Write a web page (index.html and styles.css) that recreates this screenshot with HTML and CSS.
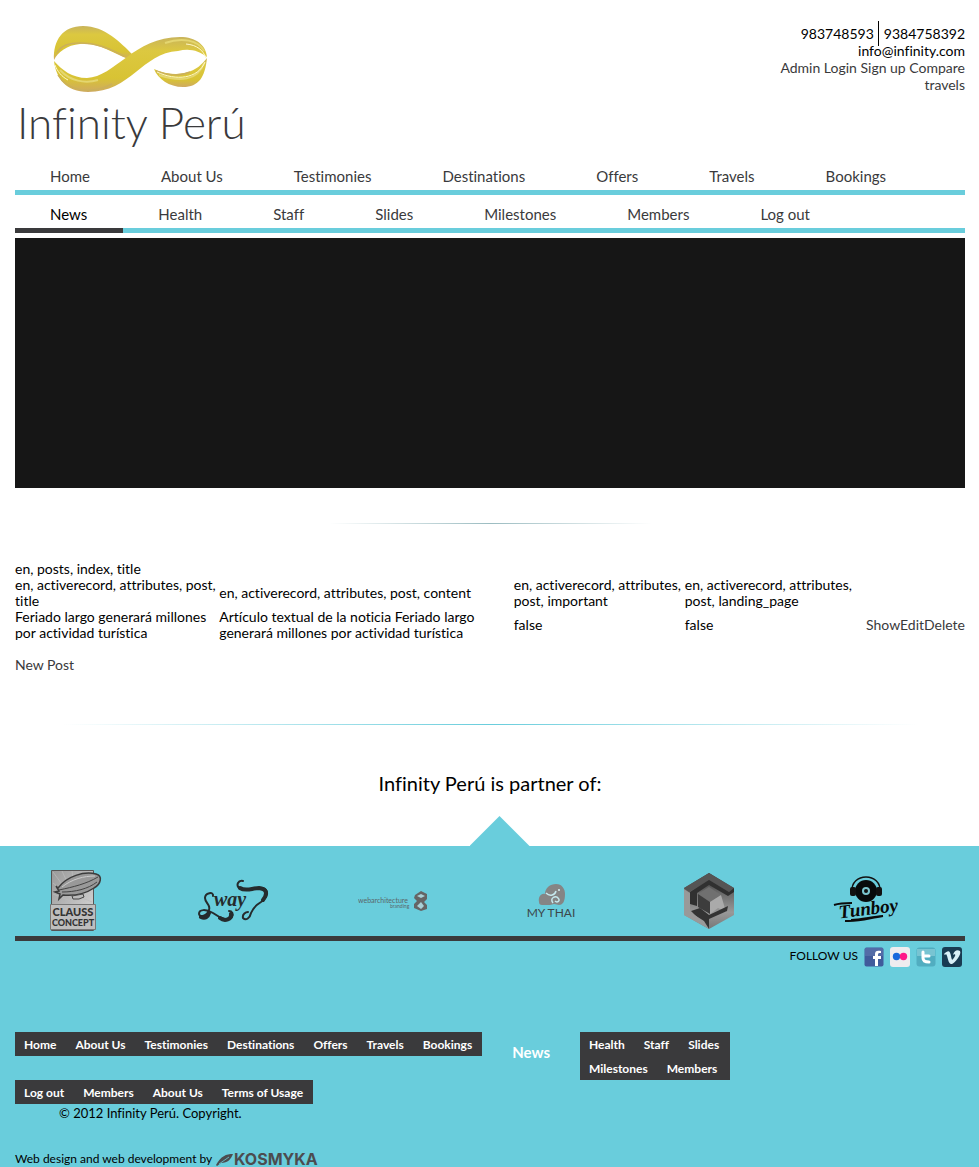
FILE: index.html
```html
<!DOCTYPE html>
<html lang="en">
<head>
<meta charset="utf-8">
<title>Infinity Perú</title>
<link rel="stylesheet" href="styles.css">
</head>
<body>
<div class="container">
  <header class="header">
    <a class="brand" href="#">
      <svg class="brand-mark" viewBox="0 0 156 68" aria-hidden="true">
        <defs>
          <linearGradient id="gold" x1="0" y1="0" x2="0" y2="1">
            <stop offset="0" stop-color="#c9b45c"/><stop offset=".25" stop-color="#dcc840"/><stop offset=".75" stop-color="#d8c334"/><stop offset="1" stop-color="#cfaa62"/>
          </linearGradient>
        </defs>
        <path fill="url(#gold)" d="M1 35C0 15 10 1 30 1c22 0 38 17 50 29l-5 4C60 28 44 17 27 19 14 20 5 27 1 35z"/>
        <path fill="url(#gold)" d="M1 36c8 9 18 17 33 17 28-1 47-41 93-41 16 0 26 8 27 20-8-6-17-9-29-6-36 2-47 41-90 41C13 67 3 53 1 36z"/>
        <path fill="url(#gold)" d="M154 33c-2 19-8 29-24 29-14 0-25-8-29-18 10 5 22 6 31 4 12-3 17-9 22-15z"/>
        <path fill="none" stroke="#cbb05a" stroke-width="1.500" d="M4 28C8 20 16 18 28 18c18 0 30 7 43 13M5 50c9 16 33 20 54 9M103 46c12 5 25 5 34 1"/>
        <path fill="none" stroke="#e4d670" stroke-width="2" d="M7 45c10 11 25 14 38 10M112 18c17-6 33-3 39 8M106 50c20 7 39 6 45-12"/>
        <path fill="none" stroke="#fff8c8" stroke-width="1" d="M2 40c2 6 7 12 13 15M133 19c11 1 17 6 20 14M104 47c19 9 41 7 48-10"/>
      </svg>
      <span class="brand-name">Infinity Perú</span>
    </a>
    <div class="contact">
      <div><span class="phone">983748593</span><span class="phone phone-last">9384758392</span></div>
      <div>info@infinity.com</div>
      <div><a href="#">Admin Login</a> <a href="#">Sign up</a> <a href="#">Compare travels</a></div>
    </div>
  </header>

  <nav class="menu" aria-label="Main">
    <a href="#">Home</a><a href="#">About Us</a><a href="#">Testimonies</a><a href="#">Destinations</a><a href="#">Offers</a><a href="#">Travels</a><a href="#">Bookings</a>
  </nav>
  <nav class="menu" aria-label="Sections">
    <a class="current" href="#">News</a><a href="#">Health</a><a href="#">Staff</a><a href="#">Slides</a><a href="#">Milestones</a><a href="#">Members</a><a href="#">Log out</a>
  </nav>

  <div class="slider"></div>
  <div class="rule rule-short"></div>

  <main class="posts">
    <div>en, posts, index, title</div>
    <table>
      <colgroup><col class="c-title"><col class="c-content"><col class="c-important"><col class="c-landing"><col></colgroup>
      <thead>
        <tr><th>en, activerecord, attributes, post, title</th><th>en, activerecord, attributes, post, content</th><th>en, activerecord, attributes, post, important</th><th>en, activerecord, attributes, post, landing_page</th><td></td></tr>
      </thead>
      <tbody>
        <tr><td>Feriado largo generará millones por actividad turística</td><td>Artículo textual de la noticia Feriado largo generará millones por actividad turística</td><td>false</td><td>false</td><td class="actions"><a href="#">Show</a><a href="#">Edit</a><a href="#">Delete</a></td></tr>
      </tbody>
    </table>
    <a class="new-post" href="#">New Post</a>
  </main>

  <div class="rule rule-long"></div>
  <h2 class="partners-title">Infinity Perú is partner of:</h2>
</div>

<div class="arrow"></div>
<footer class="footer">
  <div class="container">
    <div class="partners">
      <a href="#" aria-label="Clauss Concept">
        <svg width="52" height="64" viewBox="0 0 52 64">
          <defs><linearGradient id="steel" x1="0" y1="0" x2="1" y2="1"><stop offset="0" stop-color="#999"/><stop offset="1" stop-color="#ddd"/></linearGradient></defs>
          <path fill="url(#steel)" stroke="#555" d="M1.500 1.500h42v60h-42z"/>
          <path stroke="#bbb" stroke-width=".7" d="M3 3l22 30M12 2l14 30M22 2l5 28M3 14l22 18M42 33L20 24M3 25l20 8"/>
          <path fill="#999" stroke="#3c3c3c" stroke-width="1.500" d="M8 19C17 7 34 2 46 5c7 2 5 10-2 14-9 6-20 8-31 7l-4 4 1-5-5-2 4-1-3-5z"/>
          <path fill="none" stroke="#444" d="M9 21c14-3 27-6 39-13M12 23c13 0 26-3 35-10"/>
          <path fill="none" stroke="#ccc" d="M12 18C22 10 34 7 45 7"/>
          <path fill="#bbb" stroke="#444" d="M22 27l11-2 1 3-5 2h-6z"/>
          <path fill="#bebebe" stroke="#777" d="M.500 35.500h45v25H.500z"/>
          <text class="clauss" x="23" y="47" text-anchor="middle">CLAUSS</text>
          <text class="clauss clauss-small" x="23" y="57" text-anchor="middle">CONCEPT</text>
        </svg>
      </a>
      <a href="#" aria-label="Sway">
        <svg width="72" height="44" viewBox="0 0 72 44">
          <text class="sway" x="16" y="27">way</text>
          <g fill="none" stroke="#252b2d" stroke-linecap="round">
            <path stroke-width="2" d="M15 17c1-5-8-3-8 2 0 5 6 7 4 12-2 6-9 8-10 4 0-5 7-5 14-1 7 5 16 9 19 4 2-3 0-6-3-6"/>
            <path stroke-width="4" d="M3 38c4 2 7 0 8-4M22 39c5 4 12 1 11-4"/>
            <path stroke-width="2" d="M45 2c-5-1-7 4-4 7 6 5 17-2 24 0 7 3 4 10-2 14-5 3-8 6-10 11-1 5-5 8-8 5-1-4 3-6 5-6"/>
            <path stroke-width="4" d="M42 9c6 4 12 0 19 0 9 1 8 7 4 12"/>
          </g>
        </svg>
      </a>
      <a href="#" aria-label="Web architecture branding">
        <svg width="70" height="20" viewBox="0 0 70 20">
          <text class="webarch" x="0" y="12">webarchitecture</text>
          <text class="webarch webarch-sub" x="32" y="17">branding</text>
          <path fill="#656565" d="M57 4l6-4 6 3v5l-3 3 3 3v4l-6 2-7-3v-4l3-3-3-3z"/>
          <path fill="#a8d0d6" d="M59 5l4-2 4 2-4 2zM59 15l4-4 3 4-3 3z"/>
        </svg>
      </a>
      <a href="#" aria-label="My Thai">
        <svg width="50" height="36" viewBox="0 0 50 36">
          <path fill="#858585" d="M13 19c-1-5 2-9 6-8 0-6 5-10 11-10 6 0 9 5 9 10 0 7-2 11-6 11l-5-1-4 1h-8c-2 0-3-1-3-3z"/>
          <path fill="none" stroke="#c5e9ee" stroke-width="1.500" d="M20 10c4 4 9 2 10-2M27 20c-4-5 3-8 5-5 3 3-1 5-3 3"/>
          <circle cx="33" cy="7" r="1" fill="#d9f3f6"/>
          <text class="thai" x="25" y="34" text-anchor="middle">MY THAI</text>
        </svg>
      </a>
      <a href="#" aria-label="Cube">
        <svg width="52" height="58" viewBox="0 0 52 58">
          <defs><linearGradient id="cube" x1="0" y1="0" x2="0" y2="1"><stop offset="0" stop-color="#383838"/><stop offset=".7" stop-color="#999"/><stop offset="1" stop-color="#777"/></linearGradient></defs>
          <path fill="url(#cube)" d="M26 1l25 15v27L26 57 1 43V16z"/>
          <path fill="#555" d="M26 1l25 15-5 4-20-12L6 20l-5-4z"/>
          <path fill="#303030" d="M26 8l20 12 5-4v4l-6 4-19-11-12 8v13l-7-2V20z"/>
          <path fill="#707070" d="M15 22l11-7 12 8-11 7z"/>
          <path fill="#3d3d3d" d="M15 22l12 8v12l-12-7z"/>
          <path fill="#aaa" d="M38 23l-11 7v12l8-6 8 4z"/>
          <path fill="#333" d="M8 39l9-3 9 7 19-9-1 5-18 8v10z"/>
          <path fill="#999" d="M1 43V17l6 4v19l14 9 5 8z"/>
        </svg>
      </a>
      <a href="#" aria-label="Tunboy">
        <svg width="70" height="50" viewBox="0 0 70 50">
          <path fill="none" stroke="#111" stroke-width="1.500" d="M19 16C17-4 49-4 47 16"/>
          <circle cx="33" cy="15" r="11" fill="#080b0c"/>
          <circle cx="33" cy="15" r="4" fill="#7bc5cf"/><circle cx="33" cy="15" r="2" fill="#111"/>
          <rect x="17" y="11" width="6" height="9" rx="2" fill="#111"/><rect x="43" y="11" width="6" height="9" rx="2" fill="#111"/>
          <text class="tunboy" x="6" y="39" transform="rotate(-7 34 36)">Tunboy</text>
          <path fill="none" stroke="#0c0c0c" stroke-width="2" d="M1 29c6-2 12-2 18-2M12 45c15 1 24-3 38-5-12 1-22 4-32 4"/>
        </svg>
      </a>
    </div>

    <div class="follow">
      <span>FOLLOW US</span>
      <a href="#" aria-label="Facebook"><svg width="20" height="20" viewBox="0 0 20 20"><rect width="19" height="19" x=".5" y=".5" rx="2" fill="#405b9b"/><path fill="#7087b9" d="M1 1h18v8H1z" opacity=".4"/><path fill="#fff" d="M11 19v-7H9V9h2V7c0-3 2-4 6-3v2c-3 0-3 0-3 3h3v3h-3v7z"/></svg></a>
      <a href="#" aria-label="Flickr"><svg width="20" height="20" viewBox="0 0 20 20"><rect width="20" height="20" rx="3" fill="#eeecef"/><circle cx="6.500" cy="9.500" r="3.700" fill="#1768dc"/><circle cx="13.500" cy="9.500" r="3.700" fill="#ff1688"/></svg></a>
      <a href="#" aria-label="Twitter"><svg width="20" height="20" viewBox="0 0 20 20"><rect width="19" height="19" x=".5" y=".5" rx="3" fill="#51adc0"/><path fill="#93d4dd" d="M1 2h18v7H1z" opacity=".6"/><path fill="none" stroke="#fff" stroke-width="3" stroke-linecap="round" stroke-linejoin="round" d="M7 5v6c0 3 2 4 6 4M7 9h6"/></svg></a>
      <a href="#" aria-label="Vimeo"><svg width="20" height="20" viewBox="0 0 20 20"><rect width="20" height="20" rx="3" fill="#193b52"/><path fill="#d9f0f8" d="M2 7c4-4 6-4 7 2 1 5 1 5 4 0 1-2-1-2-2-1 1-4 4-6 7-4 2 3-5 12-8 13-4 1-4-8-6-10L3 8z"/></svg></a>
    </div>

    <div class="sitemap">
      <nav class="bar" aria-label="Footer"><a href="#">Home</a><a href="#">About Us</a><a href="#">Testimonies</a><a href="#">Destinations</a><a href="#">Offers</a><a href="#">Travels</a><a href="#">Bookings</a></nav>
      <a class="sitemap-news" href="#">News</a>
      <nav class="bar bar-narrow" aria-label="Footer sections"><a href="#">Health</a><a href="#">Staff</a><a href="#">Slides</a><a href="#">Milestones</a><a href="#">Members</a></nav>
    </div>
    <nav class="bar" aria-label="Account"><a href="#">Log out</a><a href="#">Members</a><a href="#">About Us</a><a href="#">Terms of Usage</a></nav>
    <p class="copyright">© 2012 Infinity Perú. Copyright.</p>
    <div class="credits">
      <span>Web design and web development by</span>
      <a href="#" aria-label="Kosmyka"><svg width="106" height="15" viewBox="0 0 106 15"><path fill="#4c4c4f" d="M0 13C5 4 10 2 17 2c-2 5-5 9-12 9l-4 3z"/><path stroke="#69cddc" stroke-width=".8" d="M3 12l10-7"/><text class="kosmyka" x="18" y="13">KOSMYKA</text></svg></a>
    </div>
  </div>
</footer>
</body>
</html>
```
FILE: styles.css
```css
* { box-sizing: border-box; }
body {
  margin: 0;
  background: #fff;
  color: #000;
  font: 14px/16px Lato, "Open Sans", sans-serif;
  font-variant-ligatures: none;
}
a { color: #3a3a3c; text-decoration: none; }
svg { display: block; }
.container { padding: 0 14px 0 15px; }

.header { display: flex; justify-content: space-between; height: 160px; padding-top: 25px; }
.brand { display: flex; flex-direction: column; padding-left: 2px; }
.brand-mark { width: 156px; height: 68px; margin-left: 36px; }
.brand-name { font-size: 44px; line-height: 58px; font-weight: 300; }
.contact { width: 204px; text-align: right; line-height: 17px; }
.phone { padding: 4px 4px 4px 0; border-right: 1px solid #000; }
.phone-last { padding: 4px 0 4px 5px; border-right: 0; }

.menu { display: flex; border-bottom: 5px solid #69cddc; font-size: 15px; white-space: nowrap; }
.menu a { padding: 4px 36px 2px 35px; line-height: 24px; }
.menu + .menu { padding-top: 3px; }
.menu .current { margin-bottom: -5px; border-bottom: 5px solid #3a3a3c; color: #000; }
.slider { height: 250px; margin-top: 5px; background: #161616; }
.rule { height: 1px; background: linear-gradient(90deg, #fff, #69cddc, #fff); }
.rule-short { width: 34%; margin: 35px auto 37px; background: linear-gradient(90deg, #fff, #9bbcc1, #fff); }
.rule-long { width: 90%; margin: 51px auto 43px; }

table { width: 100%; table-layout: fixed; border-spacing: 0; }
th, td { padding: 0; font-weight: 400; text-align: left; vertical-align: middle; }
.c-title { width: 21.5%; }
.c-content { width: 31%; }
.c-important { width: 18%; }
.c-landing { width: 19%; }
.actions { text-align: right; white-space: nowrap; }
.new-post { display: block; margin-top: 16px; }
.partners-title { margin: 0 0 18px; font-size: 20px; line-height: 30px; font-weight: 400; text-align: center; }
.arrow { width: 60px; height: 30px; margin-left: calc(50% - 20px); background: #69cddc; clip-path: polygon(50% 0, 100% 100%, 0 100%); }

.footer { background: #69cddc; }
.partners { display: grid; grid-template-columns: repeat(6, 1fr); align-items: center; height: 95px; padding-top: 20px; border-bottom: 5px solid #3a3a3c; }
.partners a { display: flex; justify-content: center; padding-right: 36px; }
.clauss { font: 900 11px Lato, sans-serif; fill: #333; }
.clauss-small { font-size: 9px; }
.sway { font: italic bold 20px "Liberation Serif", serif; fill: #252b2d; }
.webarch { font: 7px Lato, sans-serif; fill: #59666a; }
.webarch-sub { font-size: 5px; }
.thai { font: 12px Lato, sans-serif; fill: #3c474a; }
.tunboy { font: italic bold 19px "Liberation Serif", serif; fill: #090909; }
.kosmyka { font: bold 16px Inter, sans-serif; fill: #4c4c4f; }

.follow { display: flex; justify-content: flex-end; gap: 6px; padding: 6px 3px 0 0; font-size: 12px; line-height: 18px; }
.sitemap { display: flex; align-items: flex-start; margin-top: 65px; }
.bar { display: flex; flex-wrap: wrap; width: fit-content; background: #3a3a3c; font-size: 12px; font-weight: 700; }
.bar a { padding: 1px 10px 0 9px; line-height: 23px; color: #fff; }
.bar-narrow { width: 150px; }
.sitemap-news { padding: 8px 30px 0; font-size: 15px; line-height: 24px; font-weight: 700; color: #fff; }
.copyright { margin: 1px 0 0 44px; font-size: 13px; }
.credits { display: flex; align-items: center; gap: 4px; padding-top: 30px; font-size: 12px; }
```
